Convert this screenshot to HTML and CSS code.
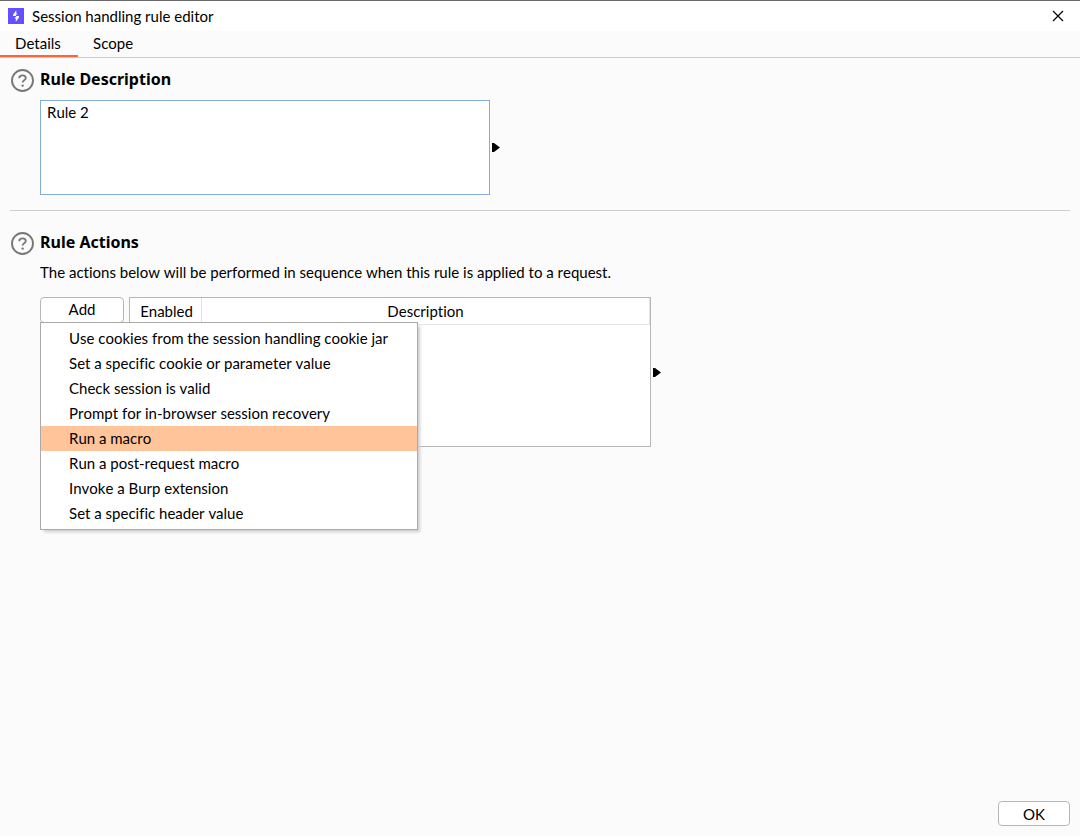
FILE: index.html
```html
<!DOCTYPE html>
<html lang="en">
<head>
<meta charset="utf-8">
<meta name="viewport" content="width=device-width, initial-scale=1">
<title>Session handling rule editor</title>
<link rel="stylesheet" href="styles.css">
</head>
<body>
<div class="window">
  <header class="titlebar">
    <svg class="logo" viewBox="0 0 16 16" aria-hidden="true">
      <rect width="16" height="16" fill="#6450ff"/>
      <path d="M8.3 2.2 5 6.7v1.2h3.2v1.4H6.6L7.8 11v2.8L11 9.4V8H8V6.6h1.5L8.3 5z" fill="#fff"/>
    </svg>
    <h1 class="title">Session handling rule editor</h1>
    <button class="close" type="button" aria-label="Close">
      <svg viewBox="0 0 12 12" width="12" height="12" aria-hidden="true"><path d="M1 1l10 10M11 1L1 11" stroke="#000" stroke-width="1.2"/></svg>
    </button>
  </header>
  <nav class="tabs" role="tablist">
    <button class="tab active" type="button" role="tab" aria-selected="true">Details</button>
    <button class="tab" type="button" role="tab" aria-selected="false">Scope</button>
  </nav>
  <main class="content">
    <section class="section">
      <button class="help" type="button" aria-label="Help on rule description">
        <svg viewBox="0 0 24 24" width="24" height="24" fill="none" stroke="#777" aria-hidden="true"><circle cx="12.5" cy="11.5" r="10.5" stroke-width="1.9"/><path d="M9.2 9.2c.1-2 1.4-2.8 3.3-2.8s3.3 1 3.3 2.7c0 2.2-3.2 2.1-3.2 4.4" stroke-width="1.8"/><circle cx="12.6" cy="16.6" r="1.2" fill="#777" stroke="none"/></svg>
      </button>
      <div class="body">
        <h2 class="heading"><label for="description">Rule Description</label></h2>
        <div class="resizable">
          <textarea class="description" id="description" spellcheck="false">Rule 2</textarea>
          <svg class="arrow" viewBox="0 0 8 9" aria-hidden="true"><path d="M0 0h2l6 4.5L2 9H0z"/></svg>
        </div>
      </div>
    </section>
    <hr class="divider">
    <section class="section">
      <button class="help" type="button" aria-label="Help on rule actions">
        <svg viewBox="0 0 24 24" width="24" height="24" fill="none" stroke="#777" aria-hidden="true"><circle cx="12.5" cy="11.5" r="10.5" stroke-width="1.9"/><path d="M9.2 9.2c.1-2 1.4-2.8 3.3-2.8s3.3 1 3.3 2.7c0 2.2-3.2 2.1-3.2 4.4" stroke-width="1.8"/><circle cx="12.6" cy="16.6" r="1.2" fill="#777" stroke="none"/></svg>
      </button>
      <div class="body">
        <h2 class="heading">Rule Actions</h2>
        <p class="intro">The actions below will be performed in sequence when this rule is applied to a request.</p>
        <div class="actions">
          <div class="add-wrap">
            <button class="button add" type="button" aria-haspopup="menu" aria-expanded="true">Add</button>
            <div class="menu" role="menu">
              <button class="item" type="button" role="menuitem">Use cookies from the session handling cookie jar</button>
              <button class="item" type="button" role="menuitem">Set a specific cookie or parameter value</button>
              <button class="item" type="button" role="menuitem">Check session is valid</button>
              <button class="item" type="button" role="menuitem">Prompt for in-browser session recovery</button>
              <button class="item selected" type="button" role="menuitem">Run a macro</button>
              <button class="item" type="button" role="menuitem">Run a post-request macro</button>
              <button class="item" type="button" role="menuitem">Invoke a Burp extension</button>
              <button class="item" type="button" role="menuitem">Set a specific header value</button>
            </div>
          </div>
          <div class="resizable">
            <div class="table-box">
              <table class="table">
                <thead><tr><th class="enabled" scope="col">Enabled</th><th scope="col">Description</th></tr></thead>
              </table>
            </div>
            <svg class="arrow" viewBox="0 0 8 9" aria-hidden="true"><path d="M0 0h2l6 4.5L2 9H0z"/></svg>
          </div>
        </div>
      </div>
    </section>
  </main>
  <footer class="footer"><button class="button ok" type="button">OK</button></footer>
</div>
</body>
</html>
```
FILE: styles.css
```css
* { box-sizing: border-box; }
body {
  margin: 0;
  background: #fbfbfb;
  color: #000;
  font: 15px/20px Lato, "Noto Sans", sans-serif;
  font-kerning: none;
  font-variant-ligatures: none;
}
button, textarea { font: inherit; font-kerning: inherit; font-variant-ligatures: inherit; color: inherit; }
button { padding: 0; border: 0; background: none; }
.window {
  display: flex;
  flex-direction: column;
  min-height: 100vh;
  border-top: 1px solid #6b6b6b;
}
.titlebar {
  display: flex;
  align-items: center;
  gap: 8px;
  height: 30px;
  padding: 0 16px 0 8px;
  background: #fff;
}
.logo { width: 16px; height: 16px; }
.title { flex: 1; margin: 0; font-size: 15px; font-weight: 400; }
.close { display: flex; }
.tabs { display: flex; height: 27px; border-bottom: 1px solid #cdcdcd; }
.tab { min-width: 71px; height: 26px; padding: 0 15px 2px; text-align: left; }
.tab.active { min-width: 78px; border-bottom: 2px solid #ff6633; padding-bottom: 0; }
.content { flex: 1; padding: 11px 10px; }
.section { display: flex; gap: 6px; }
.help { flex: none; width: 24px; height: 24px; }
.body { flex: 1; min-width: 0; }
.heading { margin: 0 0 11px; font: 700 16px/20px "Noto Sans", "Open Sans", sans-serif; }
.resizable { display: flex; align-items: center; gap: 2px; }
.description {
  display: block;
  width: 450px;
  height: 95px;
  padding: 1px 6px;
  border: 1px solid #84aeda;
  background: #fff;
  resize: none;
  outline: 0;
}
.arrow { width: 8px; height: 9px; }
.divider { height: 1px; margin: 15px 0 21px; border: 0; background: #cdcdcd; }
.section .heading + .intro { margin: -1px 0 15px; }
.actions { display: flex; align-items: flex-start; gap: 5px; }
.add-wrap { position: relative; }
.button { height: 26px; padding-bottom: 2px; border: 1px solid #b9b5b7; border-radius: 4px; background: #fff; }
.add { width: 84px; }
.ok { width: 72px; height: 25px; padding: 0; }
.menu {
  position: absolute;
  top: 25px;
  left: 0;
  width: 378px;
  padding: 3px 0;
  border: 1px solid #aaa;
  background: #fff;
  box-shadow: 3px 3px 3px -1px #ccc;
}
.item { display: block; width: 100%; height: 25px; padding: 0 0 2px 28px; text-align: left; }
.item.selected { background: #ffc499; }
.table-box { width: 522px; height: 150px; border: 1px solid #b9b5b7; background: #fff; }
.table { width: 100%; border-collapse: separate; border-spacing: 0; }
.table th {
  height: 27px;
  padding: 0 0 1px;
  border: solid #e3e3e3;
  border-width: 0 1px 1px 0;
  font-weight: 400;
}
.table .enabled { width: 72px; padding-left: 2px; }
.footer { display: flex; justify-content: flex-end; padding: 0 10px 10px; }
```
